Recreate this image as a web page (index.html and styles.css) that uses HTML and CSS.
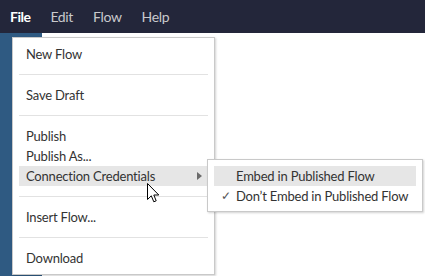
FILE: index.html
```html
<!DOCTYPE html>
<html>
<head>
<meta charset="utf-8">
<link rel="stylesheet" href="styles.css">
</head>
<body>
<div class="topbar">
  <span class="tm active">File</span>
  <span class="tm">Edit</span>
  <span class="tm">Flow</span>
  <span class="tm">Help</span>
</div>
<div class="main">
  <div class="sidebar"></div>
  <div class="canvas"></div>
</div>

<div class="menu">
  <div class="item">New Flow</div>
  <div class="sep"></div>
  <div class="item">Save Draft</div>
  <div class="sep"></div>
  <div class="item">Publish</div>
  <div class="item">Publish As...</div>
  <div class="item hl has-sub">Connection Credentials
    <svg class="arrow" width="5" height="8" viewBox="0 0 5 8"><path d="M0 0 L5 4 L0 8 Z" fill="#6b6b6b"/></svg>
    <div class="submenu">
      <div class="sitem hl">Embed in Published Flow</div>
      <div class="sitem"><span class="check">✓</span>Don’t Embed in Published Flow</div>
    </div>
  </div>
  <div class="sep"></div>
  <div class="item">Insert Flow...</div>
  <div class="sep"></div>
  <div class="item">Download</div>
</div>

<svg class="cursor" width="13" height="20" viewBox="0 0 13 20">
  <path d="M0.5 0.5 L0.5 16.5 L4.3 12.8 L6.8 18.8 L9.2 17.8 L6.8 12 L11.8 12 Z" fill="#fff" stroke="#000" stroke-width="1" stroke-linejoin="miter"/>
</svg>
</body>
</html>
```
FILE: styles.css
```css
html, body {
  margin: 0;
  padding: 0;
  background: #ffffff;
  width: 425px;
  height: 276px;
  overflow: hidden;
  font-family: Lato, "Open Sans", sans-serif;
}
.topbar {
  height: 33px;
  background: #23263a;
  display: flex;
  align-items: center;
  padding-left: 10px;
  gap: 20px;
}
.tm {
  color: #c9c9cc;
  font-size: 14px;
  letter-spacing: -0.35px;
  line-height: 33px;
  padding-bottom: 1px;
}
.tm.active {
  color: #ffffff;
  font-weight: bold;
  letter-spacing: -0.5px;
}
.main {
  display: flex;
  height: 243px;
}
.sidebar {
  width: 42px;
  background: #2f5a82;
}
.canvas {
  flex: 1;
  background: #ffffff;
}
.menu {
  position: absolute;
  left: 12px;
  top: 37px;
  width: 189px;
  height: 224px;
  padding: 6px;
  background: #ffffff;
  border: 1px solid #c9c9c9;
  box-shadow: 1px 1px 2px rgba(0,0,0,0.18);
  color: #333333;
  font-size: 13px;
  letter-spacing: -0.2px;
}
.item {
  position: relative;
  height: 20px;
  line-height: 20px;
  padding-left: 7px;
  white-space: nowrap;
}
.item.hl {
  background: #e6e6e6;
}
.sep {
  height: 1px;
  background: #e2e2e2;
  margin: 10px 0;
}
.arrow {
  position: absolute;
  right: 6px;
  top: 6px;
}
.submenu {
  position: absolute;
  left: 188px;
  top: -7px;
  width: 202px;
  padding: 6px 6px 5px 6px;
  background: #ffffff;
  border: 1px solid #c9c9c9;
  box-shadow: 1px 1px 2px rgba(0,0,0,0.18);
  z-index: 2;
}
.sitem {
  height: 20px;
  line-height: 20px;
  padding-left: 22px;
  position: relative;
  white-space: nowrap;
}
.sitem.hl {
  background: #e6e6e6;
}
.check {
  position: absolute;
  left: 7px;
  top: 0;
  color: #555555;
  font-size: 12px;
}
.cursor {
  position: absolute;
  left: 147px;
  top: 183px;
  z-index: 5;
}
```
